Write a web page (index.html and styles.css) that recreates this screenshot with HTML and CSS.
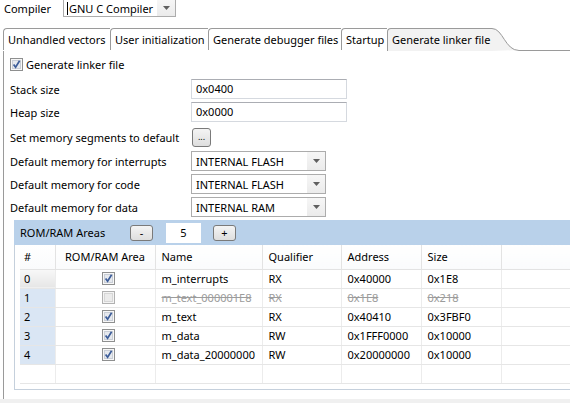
FILE: index.html
```html
<!DOCTYPE html>
<html lang="en">

<head>
  <title>Generate linker file</title>
  <meta charset="utf-8">
  <link rel="stylesheet" href="styles.css">
</head>

<body>
  <svg class="defs" width="0" height="0">
    <symbol id="checked" viewBox="0 0 13 13">
      <rect x="0.5" y="0.5" width="12" height="12" fill="#f7f7f7" stroke="#8e8f8f" />
      <rect x="2.5" y="2.5" width="8" height="8" fill="#e6e9ee" stroke="#c9ced6" />
      <path d="M3.6 6.4 L5.6 9.2 L9.6 2.8" fill="none" stroke="#3d5d99" stroke-width="1.7" />
    </symbol>
    <symbol id="unchecked" viewBox="0 0 13 13">
      <rect x="0.5" y="0.5" width="12" height="12" fill="#f4f4f4" stroke="#b1b1b1" />
      <rect x="2.5" y="2.5" width="8" height="8" fill="#ebebeb" stroke="#d6d6d6" />
    </symbol>
    <symbol id="arrow" viewBox="0 0 7 4">
      <path d="M0 0 L7 0 L3.5 4 Z" fill="#5f5f5f" />
    </symbol>
  </svg>

  <!-- Compiler selection -->
  <div class="topbar">
    <span class="top-label">Compiler</span>
    <div class="combo combo-compiler">
      <span class="combo-text"><span class="caret"></span>GNU C Compiler</span>
      <span class="combo-arrow"><svg width="7" height="4"><use href="#arrow" /></svg></span>
    </div>
  </div>

  <!-- Tabs -->
  <div class="tabs">
    <div class="tab tab-vectors">Unhandled vectors</div>
    <div class="tab tab-init">User initialization</div>
    <div class="tab tab-debug">Generate debugger files</div>
    <div class="tab tab-startup">Startup</div>
    <div class="tab tab-linker selected">Generate linker file</div>
    <svg class="tab-curve" width="32" height="23" viewBox="0 0 32 23">
      <path d="M0 0 L1 0 C12 0 14 22 28 22 L0 23 Z" fill="#f2f2f2" />
      <path d="M0 0.5 L1 0.5 C12 0.5 14 22.5 28 22.5 L32 22.5" fill="none" stroke="#9a9a9a" />
    </svg>
    <div class="tab-rest"></div>
  </div>

  <div class="panel">
    <div class="check-row">
      <svg class="cb" width="13" height="13"><use href="#checked" /></svg>
      <span>Generate linker file</span>
    </div>

    <!-- Linker settings -->
    <div class="form">
      <div class="form-row">
        <span class="label">Stack size</span>
        <div class="textbox">0x0400</div>
      </div>
      <div class="form-row spaced">
        <span class="label">Heap size</span>
        <div class="textbox">0x0000</div>
      </div>
      <div class="form-row spaced-small">
        <span class="label">Set memory segments to default</span>
        <button class="small-button dots">...</button>
      </div>
      <div class="form-row">
        <span class="label">Default memory for interrupts</span>
        <div class="combo combo-memory">
          <span class="combo-text">INTERNAL FLASH</span>
          <span class="combo-arrow"><svg width="7" height="4"><use href="#arrow" /></svg></span>
        </div>
      </div>
      <div class="form-row">
        <span class="label">Default memory for code</span>
        <div class="combo combo-memory">
          <span class="combo-text">INTERNAL FLASH</span>
          <span class="combo-arrow"><svg width="7" height="4"><use href="#arrow" /></svg></span>
        </div>
      </div>
      <div class="form-row">
        <span class="label">Default memory for data</span>
        <div class="combo combo-memory">
          <span class="combo-text">INTERNAL RAM</span>
          <span class="combo-arrow"><svg width="7" height="4"><use href="#arrow" /></svg></span>
        </div>
      </div>
    </div>

    <!-- ROM/RAM areas -->
    <div class="areas">
      <div class="areas-bar">
        <span class="areas-title">ROM/RAM Areas</span>
        <button class="small-button step">-</button>
        <div class="count">5</div>
        <button class="small-button step">+</button>
      </div>
      <div class="grid-wrap">
        <table class="grid">
          <colgroup>
            <col class="col-num">
            <col class="col-area">
            <col class="col-name">
            <col class="col-qual">
            <col class="col-addr">
            <col class="col-size">
            <col class="col-rest">
          </colgroup>
          <thead>
            <tr>
              <th class="num-head">#</th>
              <th class="center">ROM/RAM Area</th>
              <th>Name</th>
              <th>Qualifier</th>
              <th>Address</th>
              <th>Size</th>
              <th class="last"></th>
            </tr>
          </thead>
          <tbody>
            <tr>
              <td class="num current">0</td>
              <td class="center"><svg class="cb" width="13" height="13"><use href="#checked" /></svg></td>
              <td>m_interrupts</td>
              <td>RX</td>
              <td>0x40000</td>
              <td>0x1E8</td>
              <td class="last"></td>
            </tr>
            <tr class="disabled">
              <td class="num">1</td>
              <td class="center"><svg class="cb" width="13" height="13"><use href="#unchecked" /></svg></td>
              <td><s>m_text_000001E8</s></td>
              <td><s>RX</s></td>
              <td><s>0x1E8</s></td>
              <td><s>0x218</s></td>
              <td class="last"></td>
            </tr>
            <tr>
              <td class="num">2</td>
              <td class="center"><svg class="cb" width="13" height="13"><use href="#checked" /></svg></td>
              <td>m_text</td>
              <td>RX</td>
              <td>0x40410</td>
              <td>0x3FBF0</td>
              <td class="last"></td>
            </tr>
            <tr>
              <td class="num">3</td>
              <td class="center"><svg class="cb" width="13" height="13"><use href="#checked" /></svg></td>
              <td>m_data</td>
              <td>RW</td>
              <td>0x1FFF0000</td>
              <td>0x10000</td>
              <td class="last"></td>
            </tr>
            <tr>
              <td class="num">4</td>
              <td class="center"><svg class="cb" width="13" height="13"><use href="#checked" /></svg></td>
              <td>m_data_20000000</td>
              <td>RW</td>
              <td>0x20000000</td>
              <td>0x10000</td>
              <td class="last"></td>
            </tr>
            <tr class="empty">
              <td></td>
              <td></td>
              <td></td>
              <td></td>
              <td></td>
              <td></td>
              <td class="last"></td>
            </tr>
          </tbody>
        </table>
      </div>
    </div>
  </div>

  <div class="statusbar"></div>
</body>

</html>
```

FILE: styles.css
```css
* {
  box-sizing: border-box;
}

body {
  margin: 0;
  width: 570px;
  height: 403px;
  overflow: hidden;
  display: flex;
  flex-direction: column;
  font-family: "Noto Sans", "Open Sans", sans-serif;
  font-size: 11px;
  color: #000;
  background-color: #fff;
}

.defs {
  position: absolute;
}

/* Compiler line at the top */
.topbar {
  display: flex;
  align-items: center;
  height: 17px;
  margin-bottom: 11px;
}

.top-label {
  margin-left: 4px;
  width: 59px;
}

.combo {
  display: flex;
  align-items: center;
  height: 20px;
  border: 1px solid #acacac;
  background-color: #fff;
}

.combo-text {
  flex: 1;
  padding-left: 4px;
  white-space: nowrap;
}

.combo-arrow {
  display: flex;
  align-items: center;
  justify-content: center;
  width: 18px;
  height: 100%;
  background: linear-gradient(#f6f6f6, #ebebeb);
}

.combo-compiler {
  width: 113px;
  height: 17px;
  border-top: none;
}

.combo-compiler .combo-text {
  display: flex;
  align-items: center;
  padding-left: 3px;
}

.caret {
  width: 1px;
  height: 13px;
  background-color: #000;
  margin-right: 1px;
}

.combo-memory {
  width: 135px;
}

/* Tab folder */
.tabs {
  display: flex;
  height: 23px;
  padding-left: 3px;
}

.tab {
  flex: none;
  height: 22px;
  padding-left: 4px;
  line-height: 21px;
  white-space: nowrap;
  border-top: 1px solid #9a9a9a;
  border-left: 1px solid #9a9a9a;
  border-top-left-radius: 4px;
  background-color: #fff;
}

.tab-vectors {
  width: 107px;
}

.tab-init {
  width: 98px;
}

.tab-debug {
  width: 133px;
}

.tab-startup {
  width: 46px;
}

.tab-linker {
  height: 23px;
  padding-right: 1px;
}

.tab.selected {
  background-color: #f2f2f2;
}

.tab-curve {
  flex: none;
}

.tab-rest {
  flex: 1;
  border-bottom: 1px solid #9a9a9a;
}

/* Main panel */
.panel {
  flex: 1;
  margin-left: 3px;
  border-left: 1px solid #9a9a9a;
  padding: 7px 0 0 6px;
}

.check-row {
  display: flex;
  align-items: center;
  height: 13px;
  gap: 3px;
}

.cb {
  display: block;
}

.form {
  margin-top: 8px;
}

.form-row {
  display: flex;
  align-items: center;
  height: 20px;
  margin-bottom: 3px;
}

.form-row.spaced {
  margin-bottom: 5px;
}

.form-row.spaced-small {
  margin-bottom: 4px;
}

.label {
  width: 181px;
  white-space: nowrap;
}

.textbox {
  width: 156px;
  height: 20px;
  padding-left: 4px;
  line-height: 18px;
  border: 1px solid #d5d9df;
  border-top-color: #abadb3;
}

.small-button {
  font-family: inherit;
  font-size: 9px;
  padding: 0;
  border: 1px solid #7a7a7a;
  border-radius: 3px;
  background: linear-gradient(#f4f4f4, #dedede);
  color: #000;
}

.dots {
  width: 19px;
  height: 19px;
  margin-left: 1px;
  line-height: 12px;
}

/* ROM/RAM group */
.areas {
  margin-top: 3px;
  margin-left: 4px;
}

.areas-bar {
  display: flex;
  align-items: center;
  height: 25px;
  padding-left: 6px;
  background-color: #b9d1ea;
}

.areas-title {
  width: 110px;
}

.step {
  width: 23px;
  height: 16px;
  font-size: 11px;
  line-height: 12px;
}

.count {
  width: 35px;
  height: 20px;
  margin: 0 12px 0 13px;
  text-align: center;
  line-height: 20px;
  background-color: #fff;
}

.grid-wrap {
  height: 145px;
  padding-left: 5px;
  border-left: 1px solid #c5d0dc;
  border-bottom: 1px solid #c5d0dc;
  overflow: hidden;
}

.grid {
  width: 560px;
  table-layout: fixed;
  border-collapse: collapse;
}

.col-num {
  width: 35px;
}

.col-area {
  width: 100px;
}

.col-name {
  width: 107px;
}

.col-qual {
  width: 79px;
}

.col-addr {
  width: 80px;
}

.col-size {
  width: 80px;
}

.grid th {
  height: 24px;
  padding: 0 0 0 6px;
  text-align: left;
  font-weight: normal;
  white-space: nowrap;
  border-right: 1px solid #e3e3e3;
  border-bottom: 1px solid #e3e3e3;
  background: linear-gradient(#ffffff, #fafbfc);
}

.grid th.num-head {
  padding-left: 4px;
}

.grid td {
  height: 19px;
  padding: 0 0 0 6px;
  white-space: nowrap;
  overflow: hidden;
  border-right: 1px solid #ececec;
  border-bottom: 1px solid #e6e6e6;
}

.grid th.last,
.grid td.last {
  border-right: none;
}

.grid .center {
  text-align: center;
  padding-left: 0;
}

.grid td.center .cb {
  margin: 0 auto;
  position: relative;
  left: 3px;
}

.grid td.num {
  padding-left: 4px;
  background-color: #dae6f4;
  border-right: 1px solid #ececec;
}

.grid td.num.current {
  background: linear-gradient(#f8f8f8, #e6e6e6);
}

.disabled s {
  color: #9c9c9c;
}

.statusbar {
  height: 4px;
  background-color: #f0f0f0;
}
```
